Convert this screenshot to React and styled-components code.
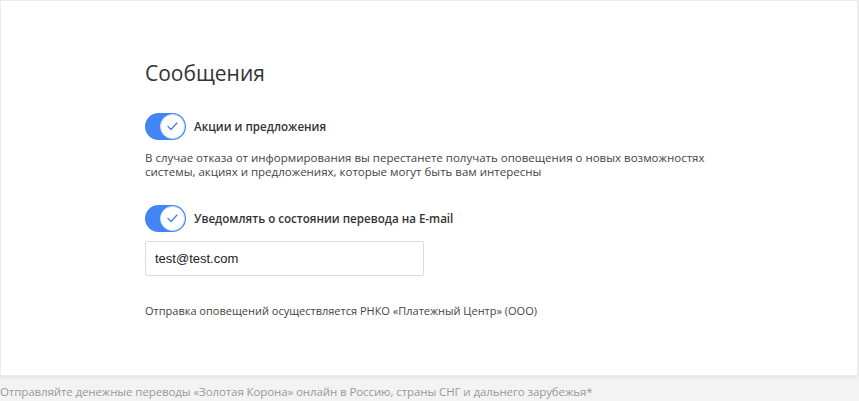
import React, { useState } from 'react';
import styled, { createGlobalStyle } from 'styled-components';

const GlobalStyle = createGlobalStyle`
    body {
        margin: 0;
        background: #f3f3f3;
        font-family: "Open Sans", "Noto Sans", sans-serif;
    }
`;

const Page = styled.div`
    width: 859px;
`;

const Card = styled.div`
    box-sizing: border-box;
    width: 858px;
    height: 376px;
    background: #fff;
    border: 1px solid #ebebeb;
    box-shadow: 0 2px 4px rgba(0, 0, 0, 0.06);
    padding: 57px 40px 0 144px;
`;

const Title = styled.h2`
    margin: 0 0 25px;
    font-size: 21px;
    font-weight: 400;
    color: #333;
    line-height: 30px;
`;

const SwitchRow = styled.label`
    display: flex;
    align-items: center;
    gap: 8px;
    cursor: pointer;
`;

const Track = styled.span`
    box-sizing: border-box;
    width: 41px;
    height: 27px;
    border-radius: 14px;
    background: ${p => (p.$on ? '#4285f4' : '#ccc')};
    display: flex;
    align-items: center;
    justify-content: ${p => (p.$on ? 'flex-end' : 'flex-start')};
    padding: 0 1px;
`;

const Knob = styled.span`
    box-sizing: border-box;
    width: 25px;
    height: 25px;
    border-radius: 50%;
    background: #fff;
    border: 1px solid #cfe0fb;
    display: flex;
    align-items: center;
    justify-content: center;
`;

const Label = styled.span`
    font-size: 11.6px;
    font-weight: 600;
    color: #333;
`;

const Hint = styled.p`
    margin: 11px 0 26px;
    font-size: 11.5px;
    line-height: 14px;
    color: #444;
    white-space: nowrap;
`;

const EmailInput = styled.input`
    box-sizing: border-box;
    display: block;
    width: 279px;
    height: 35px;
    margin-top: 9px;
    padding: 0 9px;
    border: 1px solid #ddd;
    border-radius: 2px;
    font-family: "Liberation Sans", Arial, sans-serif;
    font-size: 13px;
    color: #222;
    outline: none;
`;

const Note = styled.p`
    margin: 27px 0 0;
    font-size: 11px;
    color: #444;
`;

const Footer = styled.p`
    margin: 8px 0 0;
    font-size: 11.5px;
    color: #999;
    letter-spacing: -0.1px;
`;

function Switch({ on, onToggle, children }) {
    return (
        <SwitchRow onClick={onToggle}>
            <Track $on={on}>
                <Knob>
                    <svg width="11" height="9" viewBox="0 0 11 9" fill="none">
                        <path d="M1 4.5 L4 7.5 L10 1" stroke="#4285f4" strokeWidth="1.3" strokeLinecap="round" strokeLinejoin="round" />
                    </svg>
                </Knob>
            </Track>
            <Label>{children}</Label>
        </SwitchRow>
    );
}

export default function App() {
    const [promo, setPromo] = useState(true);
    const [notify, setNotify] = useState(true);
    const [email, setEmail] = useState('test@test.com');

    return (
        <Page>
            <GlobalStyle />
            <Card>
                <Title>Сообщения</Title>
                <Switch on={promo} onToggle={() => setPromo(!promo)}>Акции и предложения</Switch>
                <Hint>
                    В случае отказа от информирования вы перестанете получать оповещения о новых возможностях<br />
                    системы, акциях и предложениях, которые могут быть вам интересны
                </Hint>
                <Switch on={notify} onToggle={() => setNotify(!notify)}>Уведомлять о состоянии перевода на E-mail</Switch>
                <EmailInput value={email} onChange={e => setEmail(e.target.value)} />
                <Note>Отправка оповещений осуществляется РНКО «Платежный Центр» (ООО)</Note>
            </Card>
            <Footer>Отправляйте денежные переводы «Золотая Корона» онлайн в Россию, страны СНГ и дальнего зарубежья*</Footer>
        </Page>
    );
}
